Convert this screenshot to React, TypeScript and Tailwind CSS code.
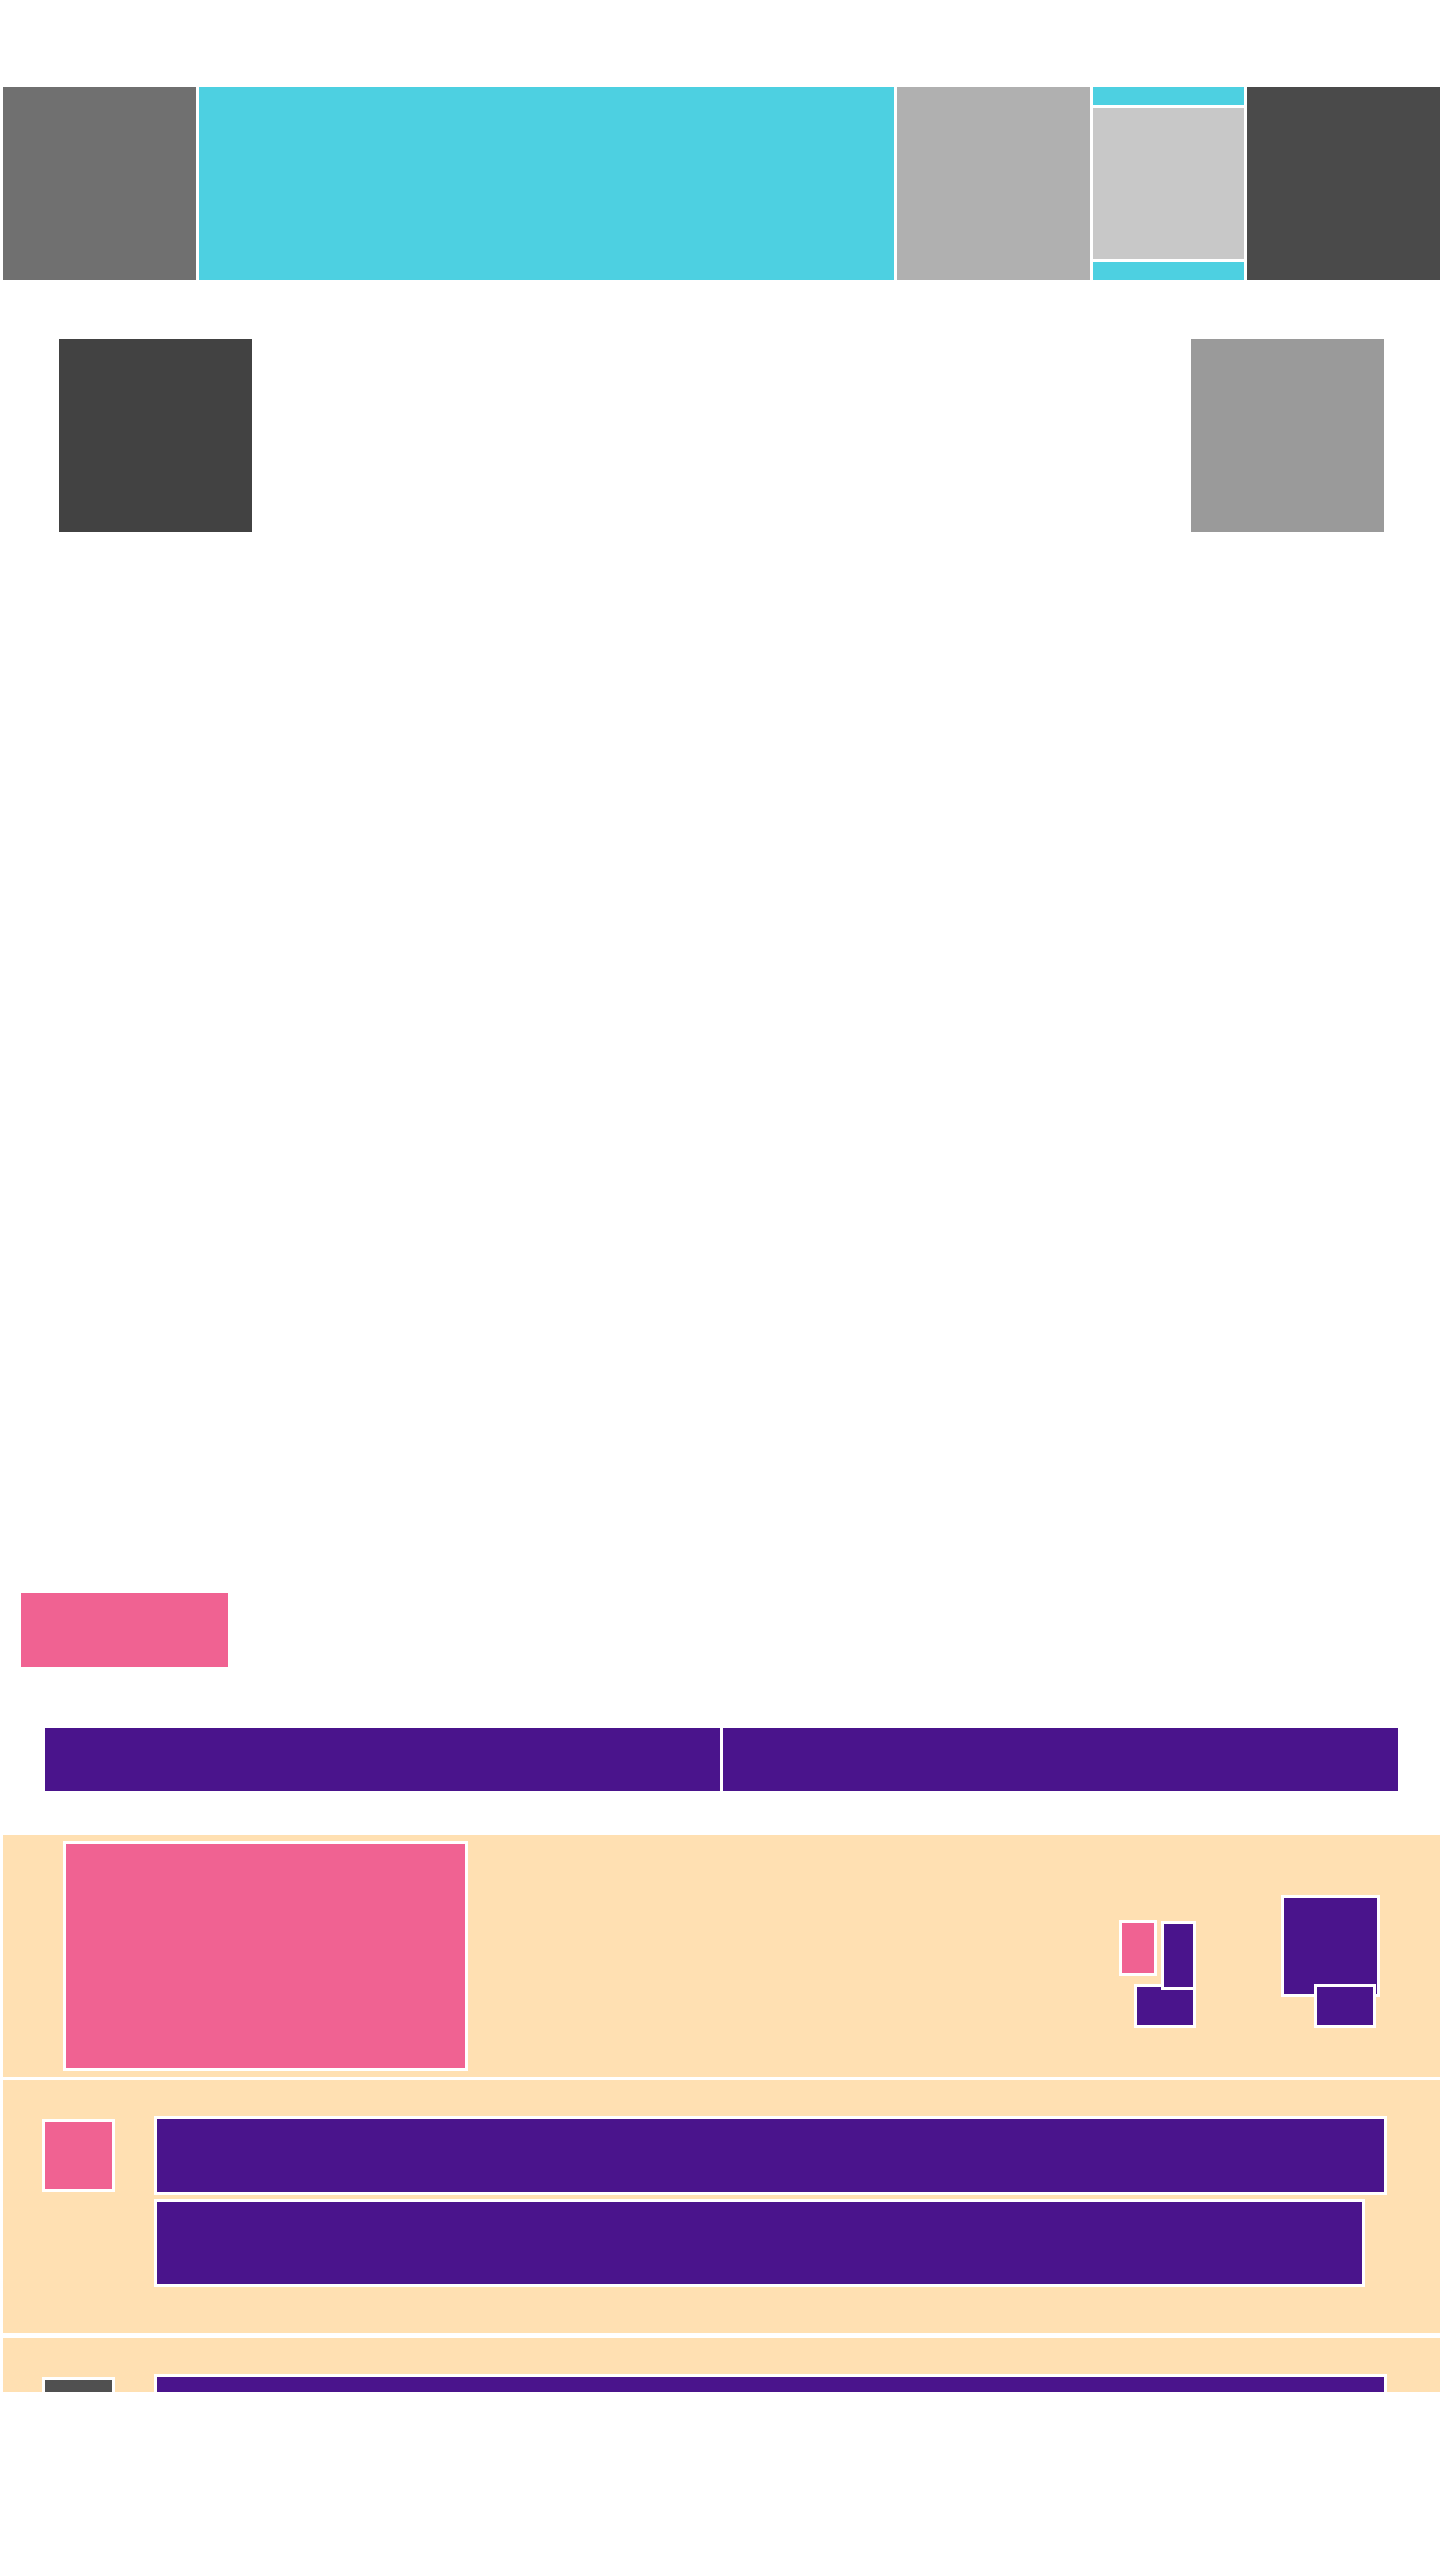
const Framed = ({ className }: { className: string }) => (
  <div className={`border-[3px] border-white ${className}`} />
);

const BarsRow = ({ iconColor }: { iconColor: string }) => (
  <div className="ml-[3px] flex h-[253px] shrink-0 bg-[#ffe0b2]">
    <Framed className={`ml-[39px] mt-[39px] h-[73px] w-[73px] shrink-0 ${iconColor}`} />
    <div className="ml-[39px] mt-[36px] flex flex-col gap-[4px]">
      <Framed className="h-[79px] w-[1233px] bg-[#4a148c]" />
      <Framed className="h-[88px] w-[1211px] bg-[#4a148c]" />
    </div>
  </div>
);

export default function App() {
  return (
    <div className="flex h-[2392px] w-[1440px] flex-col overflow-hidden bg-white">
      <header className="mt-[87px] flex h-[193px] shrink-0 gap-[3px] pl-[3px]">
        <div className="w-[193px] bg-[#707070]" />
        <div className="w-[695px] bg-[#4dd0e1]" />
        <div className="w-[193px] bg-[#b0b0b0]" />
        <div className="flex w-[151px] flex-col gap-[3px]">
          <div className="h-[18px] bg-[#4dd0e1]" />
          <div className="h-[151px] bg-[#c8c8c8]" />
          <div className="h-[18px] bg-[#4dd0e1]" />
        </div>
        <div className="w-[193px] bg-[#4a4a4a]" />
      </header>

      <div className="mt-[59px] flex shrink-0 justify-between pl-[59px] pr-[56px]">
        <div className="h-[193px] w-[193px] bg-[#424242]" />
        <div className="h-[193px] w-[193px] bg-[#9a9a9a]" />
      </div>

      <div className="ml-[21px] mt-[1061px] h-[74px] w-[207px] shrink-0 bg-[#f06292]" />

      <div className="mt-[61px] flex shrink-0 gap-[3px] pl-[45px]">
        <div className="h-[63px] w-[675px] bg-[#4a148c]" />
        <div className="h-[63px] w-[675px] bg-[#4a148c]" />
      </div>

      <div className="ml-[3px] mt-[44px] flex h-[242px] shrink-0 items-start bg-[#ffe0b2] pl-[60px] pt-[6px]">
        <Framed className="h-[230px] w-[405px] shrink-0 bg-[#f06292]" />
        <div className="relative ml-[651px] mt-[79px] h-[108px] w-[77px] shrink-0">
          <Framed className="absolute left-0 top-0 h-[56px] w-[38px] bg-[#f06292]" />
          <Framed className="absolute left-[15px] top-[64px] h-[44px] w-[62px] bg-[#4a148c]" />
          <Framed className="absolute left-[42px] top-[1px] h-[69px] w-[35px] bg-[#4a148c]" />
        </div>
        <div className="relative ml-[85px] mt-[54px] h-[133px] w-[99px] shrink-0">
          <Framed className="absolute left-0 top-0 h-[102px] w-[99px] bg-[#4a148c]" />
          <Framed className="absolute left-[33px] top-[89px] h-[44px] w-[62px] bg-[#4a148c]" />
        </div>
      </div>

      <div className="mt-[3px]">
        <BarsRow iconColor="bg-[#f06292]" />
      </div>
      <div className="mt-[5px]">
        <BarsRow iconColor="bg-[#505050]" />
      </div>
    </div>
  );
}
